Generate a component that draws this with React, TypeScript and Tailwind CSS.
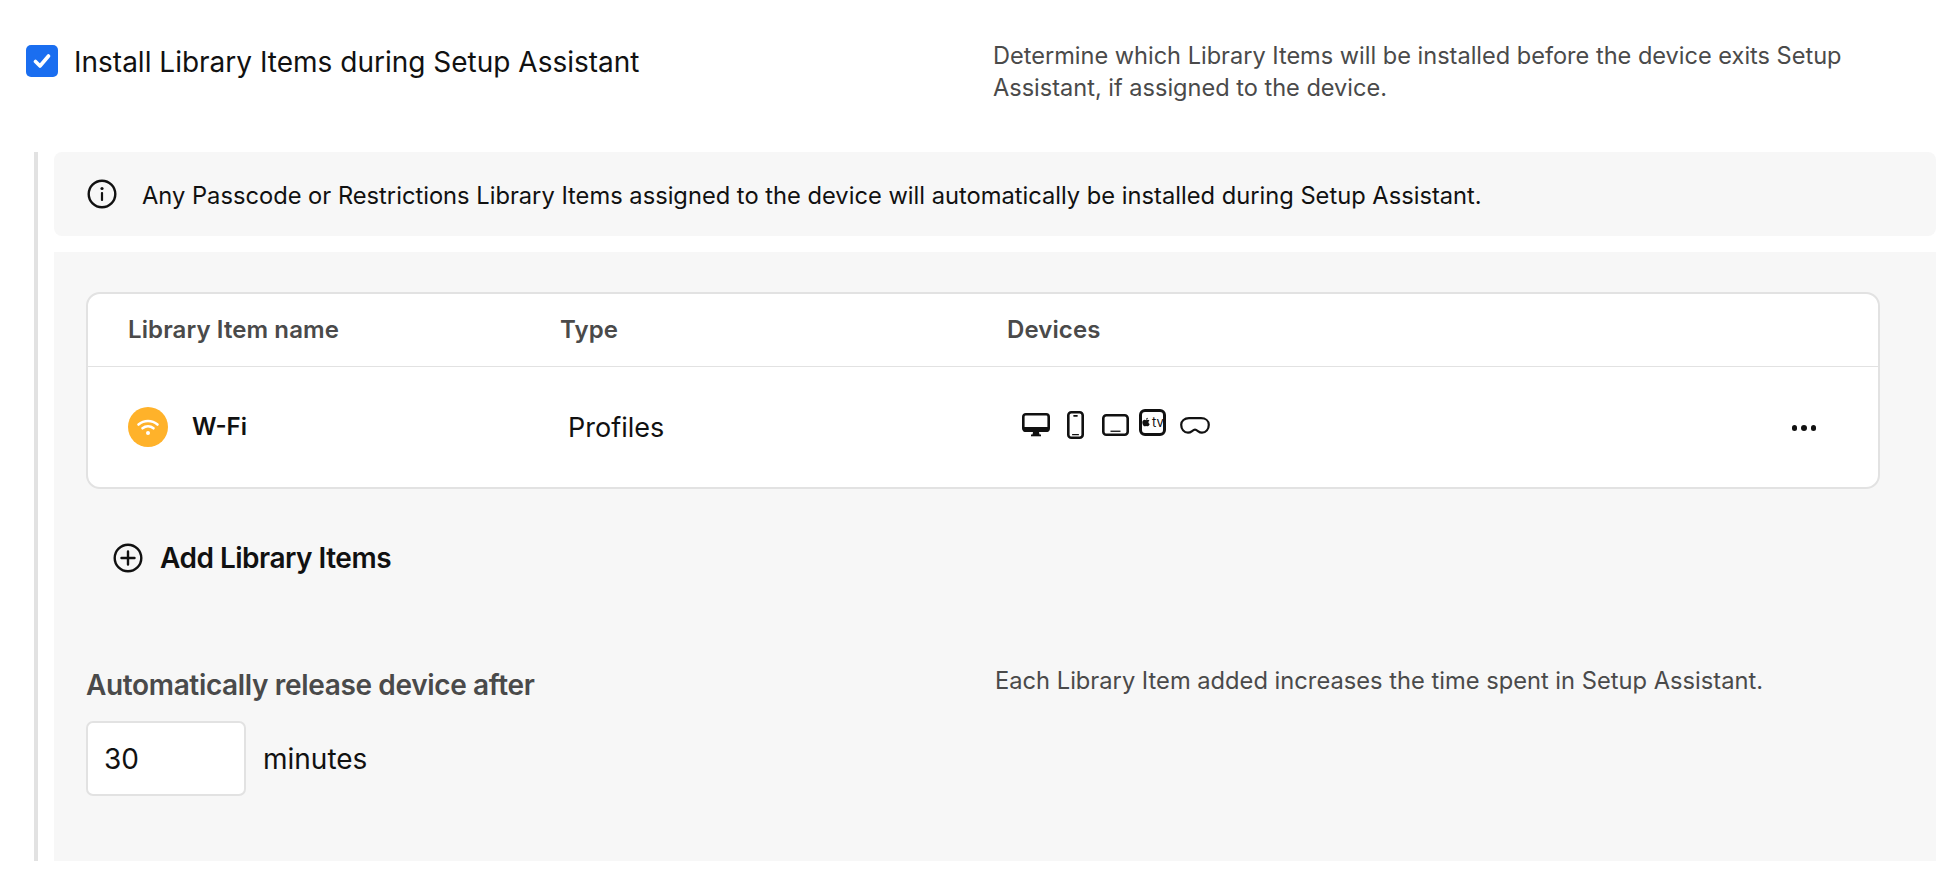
import React from "react";
import { FaApple } from "react-icons/fa";

function Monitor() {
  return (
    <svg width="28" height="24" viewBox="0 0 28 24" fill="none" className="block">
      <rect x="1.300" y="1.300" width="25.400" height="16.400" rx="2.500" fill="#fff" stroke="#111" strokeWidth="2.600" />
      <path d="M1 14h26v2.500a2.500 2.500 0 0 1-2.500 2.500h-21A2.500 2.500 0 0 1 1 16.500z" fill="#111" />
      <path d="M11 19h6l.6 3H10.400z" fill="#111" />
      <rect x="9" y="21.500" width="10" height="1.800" fill="#111" />
    </svg>
  );
}
function Phone() {
  return (
    <svg width="17" height="28" viewBox="0 0 17 28" fill="none" className="block">
      <rect x="1.300" y="1.300" width="14.400" height="25.400" rx="3" stroke="#111" strokeWidth="2.600" />
      <rect x="6.200" y="4" width="4.600" height="1.800" rx="0.800" fill="#111" />
      <rect x="5" y="23" width="7" height="1.300" rx="0.600" fill="#111" />
    </svg>
  );
}
function Tablet() {
  return (
    <svg width="27" height="22" viewBox="0 0 27 22" fill="none" className="block">
      <rect x="1.300" y="1.300" width="24.400" height="19.400" rx="3" stroke="#111" strokeWidth="2.600" />
      <rect x="8.500" y="16.600" width="10" height="1.300" fill="#111" />
    </svg>
  );
}
function TV() {
  return (
    <div className="relative w-[27px] h-[27px] rounded-[6px] border-[3px] border-[#111] flex items-center justify-center gap-[1px] text-[#111]">
      <FaApple size={10} className="shrink-0" />
      <span className="text-[13px] leading-none font-normal">tv</span>
    </div>
  );
}
function Vision() {
  return (
    <svg width="30" height="17" viewBox="0 0 30 17" fill="none" className="block">
      <path
        d="M9 1.200h12c4.500 0 7.800 2.600 7.800 6.500 0 4.500-2.800 8-6.800 8-3.500 0-4.500-3-7-3s-3.500 3-7 3c-4 0-6.800-3.500-6.800-8C1.200 3.800 4.500 1.200 9 1.200z"
        stroke="#111"
        strokeWidth="2.200"
        strokeLinejoin="round"
      />
    </svg>
  );
}
function Wifi() {
  return (
    <svg width="24" height="24" viewBox="0 0 24 24" fill="none" className="block">
      <path d="M2.500 9.500C8 4.800 16 4.800 21.500 9.500" stroke="#fff" strokeWidth="2.600" strokeLinecap="round" />
      <path d="M6.500 13.300c3.300-2.700 7.700-2.700 11 0" stroke="#fff" strokeWidth="2.600" strokeLinecap="round" />
      <circle cx="12" cy="18" r="2" fill="#fff" />
    </svg>
  );
}
function InfoIcon() {
  return (
    <svg width="30" height="30" viewBox="0 0 30 30" fill="none" className="block shrink-0">
      <circle cx="15" cy="15" r="13.300" stroke="#111" strokeWidth="2.400" />
      <circle cx="15" cy="9.500" r="1.600" fill="#111" />
      <rect x="13.900" y="13" width="2.200" height="9" rx="1" fill="#111" />
    </svg>
  );
}
function PlusIcon() {
  return (
    <svg width="30" height="30" viewBox="0 0 30 30" fill="none" className="block shrink-0">
      <circle cx="15" cy="15" r="13.300" stroke="#111" strokeWidth="2.400" />
      <path d="M15 8.500v13M8.500 15h13" stroke="#111" strokeWidth="2.400" strokeLinecap="round" />
    </svg>
  );
}

export default function App() {
  return (
    <div className="min-h-screen bg-white text-[#111] pt-[45px] pl-[26px] pr-[22px] font-['Inter',sans-serif]">
      <div className="flex items-start h-[107px]">
        <div className="flex items-start w-[967px]">
          <div className="w-[32px] h-[32px] rounded-[5px] bg-[#1a6ef0] flex items-center justify-center shrink-0">
            <svg width="18" height="16" viewBox="0 0 18 16" fill="none">
              <path d="M2.500 8.500l4.500 4.500 8.500-10" stroke="#fff" strokeWidth="3.600" strokeLinecap="round" strokeLinejoin="round" />
            </svg>
          </div>
          <span className="ml-[16px] mt-[0px] text-[28px] leading-[34px]">Install Library Items during Setup Assistant</span>
        </div>
        <p className="text-[23.55px] leading-[32px] text-[#4a4a4a] -mt-[5px] w-[900px]">
          Determine which Library Items will be installed before the device exits Setup Assistant, if assigned to the device.
        </p>
      </div>

      <div className="ml-[8px] border-l-4 border-[#e2e2e2] pl-[16px] flex flex-col gap-[16px]">
        <div className="h-[84px] rounded-[8px] bg-[#f7f7f7] flex items-center pl-[33px] gap-[25px]">
          <InfoIcon />
          <span className="text-[23.7px] leading-[30px] mt-[3px]">
            Any Passcode or Restrictions Library Items assigned to the device will automatically be installed during Setup Assistant.
          </span>
        </div>

        <div className="h-[609px] bg-[#f7f7f7] pt-[40px] pl-[32px] pr-[56px]">
          <div className="rounded-[14px] border-2 border-[#e2e2e2] bg-white h-[197px]">
            <div className="h-[73px] grid grid-cols-[432px_447px_1fr] items-center pl-[40px] border-b border-[#e2e2e2] text-[24px] leading-[30px] font-semibold tracking-[0.1px] text-[#4a4a4a]">
              <span>Library Item name</span>
              <span>Type</span>
              <span>Devices</span>
            </div>
            <div className="h-[120px] grid grid-cols-[432px_447px_1fr] items-center pl-[40px]">
              <div className="flex items-center gap-[24px]">
                <div className="w-[40px] h-[40px] rounded-full bg-[#ffb22a] flex items-center justify-center">
                  <Wifi />
                </div>
                <span className="text-[24px] leading-[30px] font-semibold -mt-[1px]">W-Fi</span>
              </div>
              <span className="pl-[8px] mt-[2px] text-[27px] leading-[34px]">Profiles</span>
              <div className="flex items-center pl-[15px] pr-[62px]">
                <div className="flex items-center h-[30px] -mt-[4px]">
                  <Monitor />
                  <div className="ml-[17px]"><Phone /></div>
                  <div className="ml-[18px]"><Tablet /></div>
                  <div className="ml-[10px] -mt-[6px]"><TV /></div>
                  <div className="ml-[14px]"><Vision /></div>
                </div>
                <div className="ml-auto mt-[2px] flex items-center gap-[4px]">
                  <span className="w-[5.5px] h-[5.5px] rounded-full bg-[#111]" />
                  <span className="w-[5.5px] h-[5.5px] rounded-full bg-[#111]" />
                  <span className="w-[5.5px] h-[5.5px] rounded-full bg-[#111]" />
                </div>
              </div>
            </div>
          </div>

          <div className="flex items-center gap-[17px] mt-[52px] ml-[27px]">
            <PlusIcon />
            <span className="text-[28px] leading-[34px] font-semibold tracking-[-0.5px]">Add Library Items</span>
          </div>

          <div className="grid grid-cols-[909px_1fr] mt-[94px]">
            <div>
              <div className="text-[28px] leading-[32px] font-semibold text-[#4a4a4a] tracking-[-0.35px]">Automatically release device after</div>
              <div className="flex items-center mt-[20px]">
                <div className="w-[160px] h-[75px] rounded-[7px] border-2 border-[#e2e2e2] bg-white flex items-center pl-[16px] text-[28px]">30</div>
                <span className="ml-[17px] text-[28px]">minutes</span>
              </div>
            </div>
            <div className="text-[23.7px] leading-[32px] text-[#4a4a4a] -mt-[4px]">Each Library Item added increases the time spent in Setup Assistant.</div>
          </div>
        </div>
      </div>
    </div>
  );
}
